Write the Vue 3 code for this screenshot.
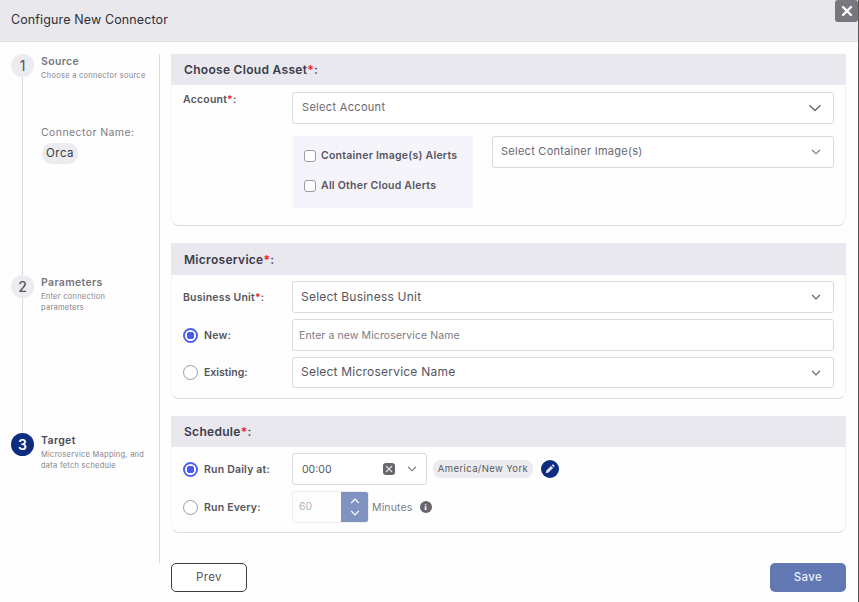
<script setup>
const steps = [
  { n: 1, title: 'Source', sub: ['Choose a connector source'], cls: 'one' },
  { n: 2, title: 'Parameters', sub: ['Enter connection', 'parameters'], cls: 'two' },
  { n: 3, title: 'Target', sub: ['Microservice Mapping, and', 'data fetch schedule'], cls: 'three' },
]
</script>

<template>
  <div class="modal">
    <header class="head">
      <h1>Configure New Connector</h1>
      <button class="close" aria-label="Close">
        <svg width="12" height="12" viewBox="0 0 12 12"><path d="M2 2l8 8M10 2l-8 8" stroke="#fff" stroke-width="2.4" stroke-linecap="round" /></svg>
      </button>
    </header>
    <div class="body">
      <aside class="side">
        <div v-for="s in steps" :key="s.n" class="step" :class="s.cls">
          <div class="rail">
            <div class="dot">{{ s.n }}</div>
            <div v-if="s.n < 3" class="line"></div>
          </div>
          <div class="info">
            <div class="st-title">{{ s.title }}</div>
            <div v-for="l in s.sub" :key="l" class="st-sub">{{ l }}</div>
            <template v-if="s.n === 1">
              <div class="cn-label">Connector Name:</div>
              <span class="chip-orca">Orca</span>
            </template>
          </div>
        </div>
      </aside>
      <main class="main">
        <section class="card c1">
          <div class="card-h">Choose Cloud Asset<em>*</em>:</div>
          <div class="row acct">
            <label class="lbl">Account<em>*</em>:</label>
            <div class="sel big">
              <span>Select Account</span>
              <svg class="chev" width="14" height="8" viewBox="0 0 14 8"><path d="M1.5 1.2L7 6.5l5.5-5.3" fill="none" stroke="#666" stroke-width="1.3" /></svg>
            </div>
          </div>
          <div class="row alerts">
            <div class="panel">
              <div class="ck"><i></i>Container Image(s) Alerts</div>
              <div class="ck"><i></i>All Other Cloud Alerts</div>
            </div>
            <div class="sel imgs">
              <span>Select Container Image(s)</span>
              <svg class="chev" width="10" height="6" viewBox="0 0 10 6"><path d="M1.2 1L5 4.8 8.8 1" fill="none" stroke="#777" stroke-width="1.1" /></svg>
            </div>
          </div>
        </section>

        <section class="card c2">
          <div class="card-h tall">Microservice<em>*</em>:</div>
          <div class="row r-bu">
            <label class="lbl">Business Unit<em>*</em>:</label>
            <div class="sel dark">
              <span>Select Business Unit</span>
              <svg class="chev" width="10" height="6" viewBox="0 0 10 6"><path d="M1.2 1L5 4.8 8.8 1" fill="none" stroke="#666" stroke-width="1.2" /></svg>
            </div>
          </div>
          <div class="row r-new">
            <label class="radio on"><i></i>New:</label>
            <div class="sel ph"><span>Enter a new Microservice Name</span></div>
          </div>
          <div class="row r-ex">
            <label class="radio"><i></i>Existing:</label>
            <div class="sel dark">
              <span>Select Microservice Name</span>
              <svg class="chev" width="10" height="6" viewBox="0 0 10 6"><path d="M1.2 1L5 4.8 8.8 1" fill="none" stroke="#666" stroke-width="1.2" /></svg>
            </div>
          </div>
        </section>

        <section class="card c3">
          <div class="card-h">Schedule<em>*</em>:</div>
          <div class="row r-daily">
            <label class="radio on"><i></i>Run Daily at:</label>
            <div class="sel time">
              <span>00:00</span>
              <b class="clear">
                <svg width="8" height="8" viewBox="0 0 8 8"><path d="M1 1l6 6M7 1L1 7" stroke="#ddd" stroke-width="1.3" /></svg>
              </b>
              <svg class="chev2" width="10" height="6" viewBox="0 0 10 6"><path d="M1.2 1L5 4.8 8.8 1" fill="none" stroke="#777" stroke-width="1.1" /></svg>
            </div>
            <span class="tz">America/New York</span>
            <b class="pen">
              <svg width="12" height="12" viewBox="0 0 12 12">
                <path d="M1.8 10.2l.6-2.7 4.6-4.6 2.1 2.1-4.6 4.6z" fill="#dfe5f5" />
                <path d="M7.7 2.2l.5-.5a1 1 0 0 1 1.4 0l.7.7a1 1 0 0 1 0 1.4l-.5.5z" fill="#dfe5f5" />
              </svg>
            </b>
          </div>
          <div class="row r-every">
            <label class="radio"><i></i>Run Every:</label>
            <div class="num">
              <span class="val">60</span>
              <div class="spin">
                <svg width="10" height="6" viewBox="0 0 10 6"><path d="M1.2 5L5 1.2 8.8 5" fill="none" stroke="#fff" stroke-width="1.2" /></svg>
                <svg width="10" height="6" viewBox="0 0 10 6"><path d="M1.2 1L5 4.8 8.8 1" fill="none" stroke="#fff" stroke-width="1.2" /></svg>
              </div>
            </div>
            <span class="mins">Minutes</span>
            <b class="inf">i</b>
          </div>
        </section>

        <footer class="foot">
          <button class="prev">Prev</button>
          <button class="save">Save</button>
        </footer>
      </main>
    </div>
  </div>
</template>

<style>
html, body { margin: 0; background: #fff; }
</style>

<style scoped>
* { box-sizing: border-box; }
.modal {
  width: 859px;
  height: 602px;
  display: flex;
  flex-direction: column;
  overflow: hidden;
  background: #fefefe;
  border-right: 1px solid #555;
  font-family: Inter, "Liberation Sans", sans-serif;
  color: #4a4a55;
}
.head {
  height: 42px;
  flex: none;
  display: flex;
  justify-content: space-between;
  align-items: flex-start;
  background: #e8e8ed;
  border-bottom: 1px solid #e0e0e4;
  padding-left: 11px;
}
h1 {
  margin: 12px 0 0;
  font-size: 12.5px;
  line-height: 16px;
  font-weight: 400;
  letter-spacing: 0.12px;
  color: #2f2f38;
}
.close {
  width: 23px;
  height: 22px;
  border: 0;
  padding: 0;
  border-radius: 3px;
  background: #77777d;
  display: flex;
  align-items: center;
  justify-content: center;
}
.body { flex: 1; display: flex; padding-top: 12px; min-height: 0; }
.side {
  width: 160px;
  flex: none;
  height: 509px;
  border-right: 1px solid #dcdce0;
  padding-left: 11px;
  display: flex;
  flex-direction: column;
}
.step { display: flex; gap: 7px; }
.step.one { height: 221px; }
.step.two { height: 158px; }
.rail { width: 23px; display: flex; flex-direction: column; align-items: center; }
.dot {
  width: 23px;
  height: 23px;
  flex: none;
  border-radius: 50%;
  background: #ebebf0;
  color: #55555e;
  font-size: 14px;
  font-weight: 500;
  display: flex;
  align-items: center;
  justify-content: center;
}
.three .dot { background: #0c2c80; color: #fff; font-weight: 600; }
.one .dot { font-weight: 400; }
.line { flex: 1; width: 1px; background: #d8d8de; }
.info { padding-top: 1px; min-width: 0; }
.st-title { font-size: 10.5px; line-height: 13px; font-weight: 600; letter-spacing: 0.35px; color: #77777f; margin-bottom: 2px; }
.three .st-title { color: #4c4c55; }
.st-sub { font-size: 7.5px; line-height: 11px; letter-spacing: 0.26px; color: #85858e; white-space: nowrap; }
.cn-label { margin-top: 45px; font-size: 10.5px; line-height: 14px; letter-spacing: 0.42px; color: #7c7c85; }
.chip-orca {
  display: inline-block;
  margin: 3px 0 0 1px;
  padding: 0 4px;
  height: 21px;
  line-height: 21px;
  border-radius: 10px;
  background: #ebebf0;
  font-size: 11.5px;
  letter-spacing: 0.5px;
  color: #3c3c45;
}
.main { flex: none; width: 675px; margin-left: 11px; display: flex; flex-direction: column; }
.card {
  border-radius: 4px 4px 8px 8px;
  border-bottom: 1px solid #dcdce0;
  border-right: 1px solid #f0f0f3;
  border-left: 1px solid #f4f4f6;
  display: flex;
  flex-direction: column;
  flex: none;
}
.c1 { height: 172px; margin-bottom: 17px; }
.c2 { height: 156px; margin-bottom: 17px; }
.c3 { height: 117px; }
.card-h {
  height: 31px;
  flex: none;
  background: #e8e8ee;
  margin: 0 -1px;
  padding-left: 13px;
  font-size: 12px;
  line-height: 31px;
  font-weight: 600;
  letter-spacing: 0.3px;
  color: #3b3b4a;
}
.card-h.tall { height: 32px; line-height: 33px; }
em { font-style: normal; color: #ee2222; }
.row { display: flex; align-items: center; padding-left: 12px; flex: none; }
.lbl { width: 108px; font-size: 10.5px; font-weight: 600; color: #55555f; letter-spacing: 0.2px; white-space: nowrap; }
.sel {
  flex: none;
  width: 542px;
  height: 32px;
  border: 1px solid #dadade;
  border-radius: 3px;
  background: #fff;
  display: flex;
  align-items: center;
  justify-content: space-between;
  padding: 0 12px 2px 9px;
  font-size: 11px;
  letter-spacing: 0.32px;
  color: #686870;
  white-space: nowrap;
}
.sel svg { margin-top: 2px; }
.acct { margin-top: 7px; align-items: flex-start; }
.acct .lbl { line-height: 14px; padding-top: 1px; }
.big .chev { margin-right: -1px; }
.alerts { margin-top: 12px; align-items: flex-start; padding-left: 121px; }
.panel {
  width: 180px;
  height: 72px;
  background: #f5f4fb;
  padding: 12px 0 0 11px;
  display: flex;
  flex-direction: column;
  gap: 15px;
}
.ck { display: flex; align-items: center; gap: 5px; height: 15px; font-size: 10.5px; font-weight: 600; color: #55555f; letter-spacing: 0.24px; white-space: nowrap; }
.ck i { width: 12px; height: 12px; border: 1.5px solid #9a9aa2; border-radius: 3px; background: #fff; flex: none; }
.imgs { width: 342px; margin-left: 19px; padding-left: 8px; letter-spacing: 0.26px; }
.r-bu { margin-top: 6px; }
.r-bu .lbl, .acct .lbl { margin-left: -1px; margin-right: 1px; }
.r-new, .r-ex { margin-top: 6px; }
.r-ex { height: 31px; }
.r-ex .sel { height: 31px; }
.dark { font-size: 12px; color: #55555e; letter-spacing: 0.22px; padding-left: 8px; }
.ph { font-size: 10.5px; color: #7c7c85; padding-left: 6px; padding-bottom: 0; letter-spacing: 0.1px; }
.radio {
  width: 108px;
  display: flex;
  align-items: center;
  gap: 6px;
  margin-left: -1px;
  margin-right: 1px;
  font-size: 10.5px;
  font-weight: 600;
  color: #55555f;
  letter-spacing: 0.2px;
  white-space: nowrap;
}
.r-ex .radio { letter-spacing: 0; }
.radio i { width: 15px; height: 15px; border-radius: 50%; border: 1.5px solid #9a9aa2; background: #fff; flex: none; }
.radio.on i { border: 2px solid #5060f0; background: radial-gradient(circle, #4a5ae8 0 3.6px, #fff 4px); }
.r-daily { margin-top: 6px; }
.time { width: 135px; padding: 0 9px 0 9px; color: #55555e; font-size: 10.5px; letter-spacing: 0; }
.time svg { margin-top: 0; }
.time span { flex: 1; }
.clear {
  width: 12px;
  height: 12px;
  border-radius: 3px;
  background: #66666c;
  display: flex;
  align-items: center;
  justify-content: center;
  margin-right: 12px;
  margin-left: -1px;
}
.tz {
  margin-left: 6px;
  height: 18px;
  line-height: 18px;
  width: 100px;
  text-align: center;
  border-radius: 8px;
  background: #ebebf0;
  font-size: 9.5px;
  letter-spacing: 0.4px;
  color: #5a5a62;
  white-space: nowrap;
}
.pen {
  margin-left: 8px;
  width: 18px;
  height: 18px;
  border-radius: 50%;
  background: #0c2c80;
  display: flex;
  align-items: center;
  justify-content: center;
}
.r-every { margin-top: 6px; }
.num {
  width: 77px;
  height: 32px;
  display: flex;
  border: 1px solid #eeeef0;
  border-radius: 3px;
  overflow: hidden;
}
.val { flex: 1; padding-left: 6px; font-size: 10.5px; line-height: 30px; color: #b4b4b8; }
.spin {
  width: 28px;
  margin: -1px -1px -1px 0;
  background: #7f92c0;
  display: flex;
  flex-direction: column;
  align-items: center;
  justify-content: space-around;
  padding: 4px 0;
}
.mins { margin-left: 3px; font-size: 10.5px; letter-spacing: 0.15px; color: #7c7c85; }
.inf {
  margin-left: 7px;
  width: 12px;
  height: 12px;
  border-radius: 50%;
  background: #66666c;
  color: #fff;
  font: 700 9px/12px "Liberation Serif", serif;
  text-align: center;
}
.foot { margin-top: 30px; display: flex; justify-content: space-between; }
.foot button {
  width: 76px;
  height: 29px;
  border-radius: 5px;
  font-family: inherit;
  font-size: 11.5px;
  letter-spacing: 0.35px;
  padding: 0 0 2px;
}
.prev { background: #fff; border: 1px solid #3c3c40; color: #55555e; }
.save { background: #6278b2; border: 0; color: #eef; font-weight: 500; }
</style>
